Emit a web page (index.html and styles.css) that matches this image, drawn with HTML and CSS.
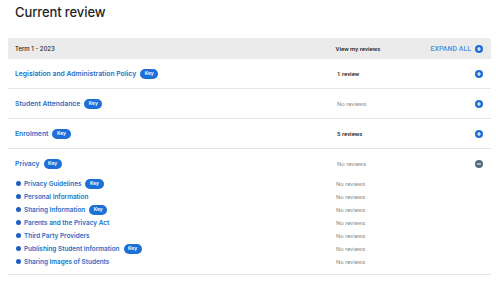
FILE: index.html
```html
<!DOCTYPE html>
<html lang="en">
<head>
  <meta charset="UTF-8">
  <meta name="viewport" content="width=device-width, initial-scale=1.0">
  <title>Current review</title>
  <link rel="stylesheet" href="styles.css">
</head>
<body>
  <!-- 标题 -->
  <h1 class="page-title">Current review</h1>

  <div class="review-table">
    <!-- 表头 -->
    <div class="table-head">
      <span class="term">Term 1 - 2023</span>
      <span class="col-reviews">View my reviews</span>
      <a class="expand-all" href="#">EXPAND ALL
        <svg class="icon" viewBox="0 0 10 10"><circle cx="5" cy="5" r="5" fill="#1d6fd8"/><path d="M5 2.6v4.8M2.6 5h4.8" stroke="#fff" stroke-width="1.4"/></svg>
      </a>
    </div>

    <!-- 政策行 -->
    <div class="policy-row">
      <div class="policy-name"><a href="#">Legislation and Administration Policy</a><span class="key">Key</span></div>
      <span class="col-reviews has-reviews">1 review</span>
      <svg class="icon" viewBox="0 0 10 10"><circle cx="5" cy="5" r="5" fill="#1d6fd8"/><path d="M5 2.6v4.8M2.6 5h4.8" stroke="#fff" stroke-width="1.4"/></svg>
    </div>

    <div class="policy-row">
      <div class="policy-name"><a href="#">Student Attendance</a><span class="key">Key</span></div>
      <span class="col-reviews">No reviews</span>
      <svg class="icon" viewBox="0 0 10 10"><circle cx="5" cy="5" r="5" fill="#1d6fd8"/><path d="M5 2.6v4.8M2.6 5h4.8" stroke="#fff" stroke-width="1.4"/></svg>
    </div>

    <div class="policy-row">
      <div class="policy-name"><a href="#">Enrolment</a><span class="key">Key</span></div>
      <span class="col-reviews has-reviews">5 reviews</span>
      <svg class="icon" viewBox="0 0 10 10"><circle cx="5" cy="5" r="5" fill="#1d6fd8"/><path d="M5 2.6v4.8M2.6 5h4.8" stroke="#fff" stroke-width="1.4"/></svg>
    </div>

    <!-- 展开的隐私行 -->
    <div class="policy-group">
      <div class="policy-row open">
        <div class="policy-name"><a href="#">Privacy</a><span class="key">Key</span></div>
        <span class="col-reviews">No reviews</span>
        <svg class="icon" viewBox="0 0 10 10"><circle cx="5" cy="5" r="5" fill="#4f6b7e"/><path d="M2.6 5h4.8" stroke="#fff" stroke-width="1.4"/></svg>
      </div>
      <ul class="sub-list">
        <li><div class="sub-name"><span class="dot"></span><a href="#">Privacy Guidelines</a><span class="key">Key</span></div><span class="col-reviews">No reviews</span></li>
        <li><div class="sub-name"><span class="dot"></span><a href="#">Personal Information</a></div><span class="col-reviews">No reviews</span></li>
        <li><div class="sub-name"><span class="dot"></span><a href="#">Sharing Information</a><span class="key">Key</span></div><span class="col-reviews">No reviews</span></li>
        <li><div class="sub-name"><span class="dot"></span><a href="#">Parents and the Privacy Act</a></div><span class="col-reviews">No reviews</span></li>
        <li><div class="sub-name"><span class="dot"></span><a href="#">Third Party Providers</a></div><span class="col-reviews">No reviews</span></li>
        <li><div class="sub-name"><span class="dot"></span><a href="#">Publishing Student Information</a><span class="key">Key</span></div><span class="col-reviews">No reviews</span></li>
        <li><div class="sub-name"><span class="dot"></span><a href="#">Sharing Images of Students</a></div><span class="col-reviews">No reviews</span></li>
      </ul>
    </div>
  </div>
</body>
</html>
```

FILE: styles.css
```css
/* 页面基础 */
body {
  margin: 0;
  padding: 0 9px 0 8px;
  font-family: Inter, "Liberation Sans", sans-serif;
  background: #fff;
  color: #222;
}

.page-title {
  margin: 0;
  padding: 4px 0 0 7px;
  height: 34px;
  font-size: 13px;
  font-weight: 500;
  color: #1f1f1f;
  letter-spacing: -0.1px;
}

/* 表格 */
.review-table {
  display: flex;
  flex-direction: column;
}

.table-head {
  display: flex;
  align-items: center;
  height: 21px;
  padding: 0 8px 0 7px;
  background: #ebebeb;
  border-radius: 0 3px 0 0;
  font-size: 6px;
  font-weight: 500;
  color: #222;
}

.term {
  flex: 1;
}

.col-reviews {
  width: 95px;
  font-size: 6px;
  color: #8c8c8c;
  font-family: Roboto, "Liberation Sans", sans-serif;
}

.table-head .col-reviews,
.col-reviews.has-reviews {
  color: #222;
  font-weight: 500;
}

.expand-all {
  display: flex;
  align-items: center;
  gap: 4px;
  color: #4b8fe0;
  font-family: Roboto, "Liberation Sans", sans-serif;
  font-size: 7px;
  text-decoration: none;
}

.icon {
  width: 8px;
  height: 8px;
  flex: none;
}

/* 政策行 */
.policy-row {
  display: flex;
  align-items: center;
  height: 29px;
  padding: 0 8px 0 7px;
  border-bottom: 1px solid #e6e6e6;
}

.policy-group {
  border-bottom: 1px solid #e6e6e6;
  padding-bottom: 6px;
}

.policy-group .policy-row {
  border-bottom: none;
}

.policy-name {
  flex: 1;
  display: flex;
  align-items: center;
  gap: 4px;
}

.policy-name a,
.sub-name a {
  color: #2570c8;
  font-size: 6.8px;
  font-weight: 600;
  text-decoration: none;
}

.sub-name a {
  font-size: 6.4px;
}

.policy-row .col-reviews {
  margin-right: 43px;
}

.key {
  display: inline-block;
  padding: 1.5px 4.5px;
  border-radius: 6px;
  background: #1d6fd8;
  color: #fff;
  font-size: 5px;
  font-weight: 600;
  line-height: 7px;
}

/* 子列表 */
.sub-list {
  list-style: none;
  margin: -1px 0 0;
  padding: 0 8px 0 8px;
}

.sub-list li {
  display: flex;
  align-items: center;
  height: 13px;
}

.sub-name {
  flex: 1;
  display: flex;
  align-items: center;
  gap: 4px;
}

.sub-name .dot {
  width: 5px;
  height: 5px;
  border-radius: 50%;
  background: #1d5fc0;
  margin-right: -1px;
}

.sub-list .col-reviews {
  margin-right: 52px;
}
```
